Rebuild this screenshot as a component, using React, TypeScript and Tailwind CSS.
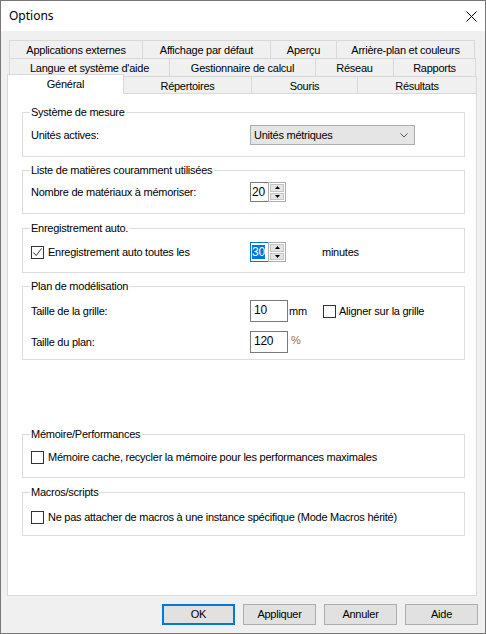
import React from 'react';

type TabDef = { label: string; w: string };

const ROW1: TabDef[] = [
  { label: 'Applications externes', w: 'w-[134px]' },
  { label: 'Affichage par défaut', w: 'w-[129px]' },
  { label: 'Aperçu', w: 'w-[67px]' },
  { label: 'Arrière-plan et couleurs', w: 'w-[139px]' },
];

const ROW2: TabDef[] = [
  { label: "Langue et système d'aide", w: 'w-[161px]' },
  { label: 'Gestionnaire de calcul', w: 'w-[147px]' },
  { label: 'Réseau', w: 'w-[79px]' },
  { label: 'Rapports', w: 'w-[83px]' },
];

const ROW3: TabDef[] = [
  { label: 'Répertoires', w: 'w-[129px]' },
  { label: 'Souris', w: 'w-[107px]' },
  { label: 'Résultats', w: 'w-[120px]' },
];

function Tab({ tab }: { tab: TabDef }) {
  return (
    <div
      className={`${tab.w} -ml-px first:ml-0 h-full shrink-0 flex items-center justify-center pt-[2px] border border-b-0 border-[#d9d9d9] bg-[#f0f0f0] whitespace-nowrap`}
    >
      {tab.label}
    </div>
  );
}

function Group({
  title,
  className,
  children,
}: {
  title: string;
  className: string;
  children: React.ReactNode;
}) {
  return (
    <fieldset className={`ml-[14px] mr-[11px] border border-[#dcdcdc] px-[8px] ${className}`}>
      <legend className="-ml-[1px] px-[1px] leading-[13px]">{title}</legend>
      {children}
    </fieldset>
  );
}

function Check({ checked = false }: { checked?: boolean }) {
  return (
    <span className="w-[13px] h-[13px] shrink-0 border border-[#333333] bg-white flex items-center justify-center">
      {checked && (
        <svg width="11" height="11" viewBox="0 0 11 11">
          <path d="M1.5 5.5 L4.2 8.5 L9.5 1.5" fill="none" stroke="#333333" strokeWidth="1" />
        </svg>
      )}
    </span>
  );
}

function Spin({ value, focused = false }: { value: string; focused?: boolean }) {
  return (
    <div className="flex h-[20px]">
      <div
        className={[
          'w-[18px] border border-r-0 bg-white flex items-center pl-[1px] text-[12px]',
          focused ? 'border-[#0078d7]' : 'border-[#7a7a7a]',
        ].join(' ')}
      >
        {focused ? <span className="bg-[#0078d7] text-white leading-[14px]">{value}</span> : value}
      </div>
      <div className="w-[18px] flex flex-col border border-[#adadad] bg-white">
        <div className="flex-1 m-[1px] mb-0 bg-[#e5e5e5] border border-[#c4c4c4] flex items-center justify-center">
          <svg width="5" height="3" viewBox="0 0 5 3">
            <path d="M0 3 L2.5 0 L5 3 Z" fill="#000" />
          </svg>
        </div>
        <div className="flex-1 m-[1px] bg-[#e5e5e5] border border-[#c4c4c4] flex items-center justify-center">
          <svg width="5" height="3" viewBox="0 0 5 3">
            <path d="M0 0 L5 0 L2.5 3 Z" fill="#000" />
          </svg>
        </div>
      </div>
    </div>
  );
}

function Field({ value }: { value: string }) {
  return (
    <div className="w-[38px] h-[22px] border border-[#7a7a7a] bg-white pl-[3px] pb-[2px] flex items-center text-[12px]">
      {value}
    </div>
  );
}

function DlgButton({ label, primary = false }: { label: string; primary?: boolean }) {
  return (
    <button
      type="button"
      className={[
        'w-[73px] h-[21px] bg-[#e1e1e1] text-[11px] flex items-center justify-center',
        primary ? 'border-2 border-[#0078d7]' : 'border border-[#adadad]',
      ].join(' ')}
    >
      {label}
    </button>
  );
}

export default function App() {
  return (
    <div className="w-[486px] h-[634px] border border-[#777777] bg-[#f0f0f0] flex flex-col text-black text-[11px] tracking-[-0.25px] font-['Liberation_Sans',Arial,sans-serif] overflow-hidden">
      {/* Title bar */}
      <div className="h-[30px] shrink-0 bg-white flex items-center justify-between pl-[8px] pr-[8px]">
        <span className="text-[12px] tracking-normal font-['Noto_Sans',sans-serif]">Options</span>
        <svg width="11" height="11" viewBox="0 0 11 11">
          <path d="M0.5 0.5 L10.5 10.5 M10.5 0.5 L0.5 10.5" stroke="#000" strokeWidth="1" />
        </svg>
      </div>

      {/* Body */}
      <div className="flex-1 flex flex-col pt-[9px]">
        {/* Tabs */}
        <div className="flex h-[18px] ml-[8px]">
          {ROW1.map(t => (
            <Tab key={t.label} tab={t} />
          ))}
        </div>
        <div className="flex h-[18px] ml-[8px]">
          {ROW2.map(t => (
            <Tab key={t.label} tab={t} />
          ))}
        </div>
        <div className="flex h-[17px] ml-[6px]">
          <div className="relative z-10 w-[117px] h-[20px] -mt-[2px] shrink-0 flex items-center justify-center border border-b-0 border-[#d9d9d9] bg-white">
            Général
          </div>
          {ROW3.map(t => (
            <Tab key={t.label} tab={t} />
          ))}
        </div>

        {/* Panel */}
        <div className="ml-[6px] w-[470px] h-[503px] border border-[#d9d9d9] bg-white flex flex-col">
          <Group title="Système de mesure" className="mt-[12px] pt-[6px] pb-[11px]">
            <div className="flex items-center h-[20px]">
              <span className="w-[219px]">Unités actives:</span>
              <div className="w-[165px] h-[20px] bg-[#e5e5e5] border border-[#adadad] flex items-center justify-between pl-[3px] pr-[6px]">
                <span>Unités métriques</span>
                <svg width="8" height="5" viewBox="0 0 8 5">
                  <path d="M0.5 0.5 L4 4 L7.5 0.5" fill="none" stroke="#555" strokeWidth="1" />
                </svg>
              </div>
            </div>
          </Group>

          <Group title="Liste de matières couramment utilisées" className="mt-[7px] pt-[5px] pb-[11px]">
            <div className="flex items-center">
              <span className="w-[219px]">Nombre de matériaux à mémoriser:</span>
              <Spin value="20" />
            </div>
          </Group>

          <Group title="Enregistrement auto." className="mt-[8px] pt-[7px] pb-[10px]">
            <div className="flex items-center">
              <div className="w-[219px] flex items-center gap-[4px]">
                <Check checked />
                <span>Enregistrement auto toutes les</span>
              </div>
              <Spin value="30" focused />
              <span className="ml-[36px]">minutes</span>
            </div>
          </Group>

          <Group title="Plan de modélisation" className="mt-[7px] pt-[7px] pb-[6px]">
            <div className="flex flex-col gap-[9px]">
              <div className="flex items-center">
                <span className="w-[219px]">Taille de la grille:</span>
                <Field value="10" />
                <span className="w-[35px] pl-[1px]">mm</span>
                <Check />
                <span className="ml-[3px]">Aligner sur la grille</span>
              </div>
              <div className="flex items-center">
                <span className="w-[219px]">Taille du plan:</span>
                <Field value="120" />
                <span className="pl-[3px] pb-[3px] text-[#b5651d]">%</span>
              </div>
            </div>
          </Group>

          <Group title="Mémoire/Performances" className="mt-[68px] pt-[8px] pb-[12px]">
            <div className="flex items-center h-[16px] gap-[4px]">
              <Check />
              <span>Mémoire cache, recycler la mémoire pour les performances maximales</span>
            </div>
          </Group>

          <Group title="Macros/scripts" className="mt-[8px] pt-[10px] pb-[10px]">
            <div className="flex items-center h-[16px] gap-[4px]">
              <Check />
              <span>Ne pas attacher de macros à une instance spécifique (Mode Macros hérité)</span>
            </div>
          </Group>
        </div>

        {/* Buttons */}
        <div className="flex justify-end gap-[8px] mt-[8px] pr-[7px]">
          <DlgButton label="OK" primary />
          <DlgButton label="Appliquer" />
          <DlgButton label="Annuler" />
          <DlgButton label="Aide" />
        </div>
      </div>
    </div>
  );
}
